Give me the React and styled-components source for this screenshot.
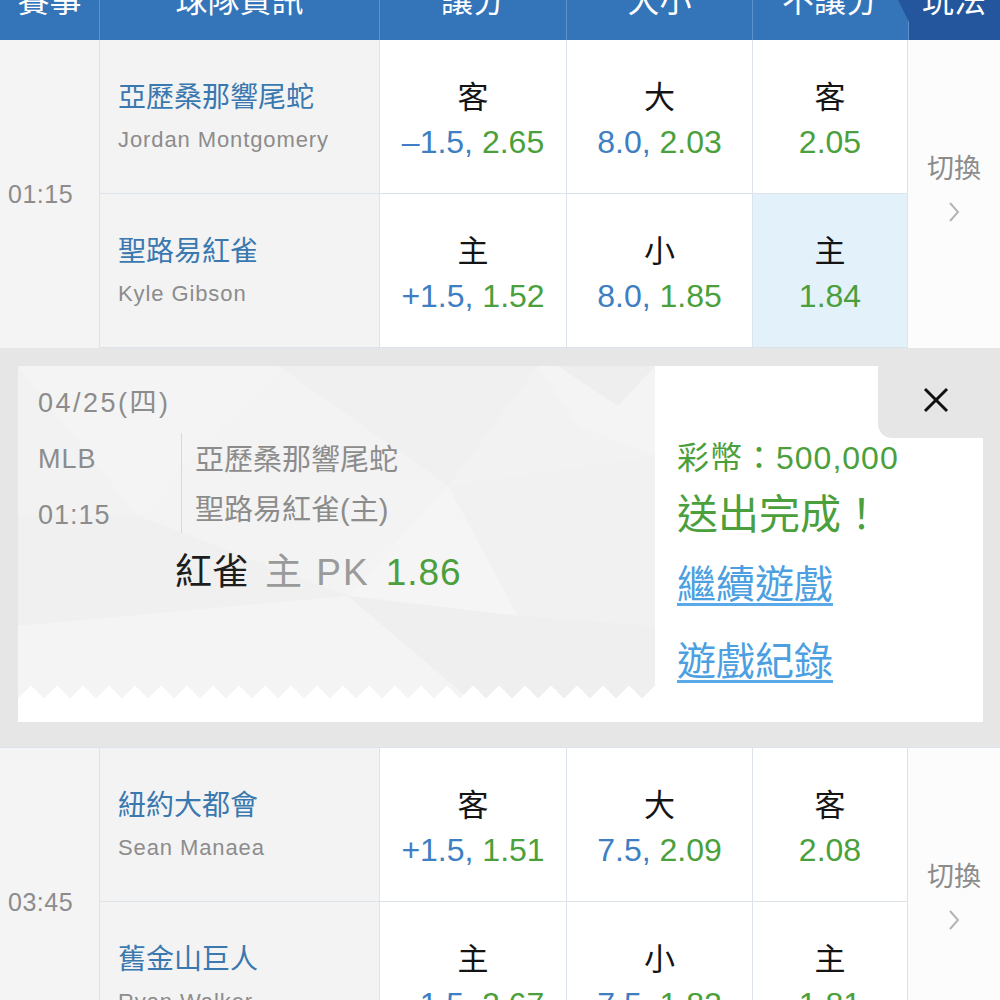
import React from 'react';
import styled, { createGlobalStyle } from 'styled-components';

const GlobalStyle = createGlobalStyle`
  * { box-sizing: border-box; }
  html, body { margin: 0; padding: 0; background: #ffffff; }
  body { font-family: "Liberation Sans", "Noto Sans CJK TC", sans-serif; overflow: hidden; }
`;

const COLS = '100px 280px 187px 186px 155px 92px';
const LINE = '#dce3ea';
const BLUE = '#3d7fc2';
const GREEN = '#4b9f3d';
const GRAY = '#8c8c8c';

const Page = styled.div`
  width: 1000px;
`;

const Header = styled.div`
  display: grid;
  grid-template-columns: ${COLS};
  height: 84px;
  margin-top: -44px;
  background: #3474b8;
`;

const HeadCell = styled.div`
  position: relative;
  display: flex;
  align-items: center;
  justify-content: center;
  color: #ffffff;
  font-size: 32px;
  border-right: 1px solid ${(p) => (p.$last ? 'transparent' : '#5e92cb')};
  background: ${(p) => (p.$dark ? '#23569c' : 'transparent')};
  border-left: ${(p) => (p.$dark ? '1px solid #5e92cb' : 'none')};
  ${(p) =>
    p.$dark &&
    `
    &::before {
      content: '';
      position: absolute;
      left: -33px;
      top: 0;
      width: 33px;
      height: 66px;
      background: #23569c;
      clip-path: polygon(0 0, 100% 0, 100% 100%);
    }
  `}
`;

const Game = styled.div`
  display: grid;
  grid-template-columns: ${COLS};
  grid-template-rows: 154px 154px;
  border-top: ${(p) => (p.$topBorder ? `1px solid ${LINE}` : 'none')};
`;

const TimeCell = styled.div`
  grid-row: span 2;
  display: flex;
  align-items: center;
  padding-left: 8px;
  background: #f4f4f4;
  border-right: 1px solid ${LINE};
  color: ${GRAY};
  font-size: 25px;
  letter-spacing: 0.5px;
`;

const TeamCell = styled.div`
  display: flex;
  flex-direction: column;
  padding: 37px 0 0 18px;
  background: #f3f3f3;
  border-right: 1px solid ${LINE};
  border-bottom: 1px solid ${LINE};
`;

const TeamName = styled.div`
  color: #3a78b0;
  font-size: 28px;
  line-height: 42px;
`;

const Pitcher = styled.div`
  color: ${GRAY};
  font-size: 22px;
  letter-spacing: 0.9px;
  line-height: 42px;
`;

const OddsCell = styled.div`
  display: flex;
  flex-direction: column;
  align-items: center;
  padding-top: 36px;
  background: ${(p) => (p.$selected ? '#e3f1fb' : '#ffffff')};
  border-right: 1px solid ${LINE};
  border-bottom: 1px solid ${LINE};
`;

const Label = styled.div`
  color: #141414;
  font-size: 31px;
  line-height: 44px;
`;

const Odds = styled.div`
  font-size: 32px;
  line-height: 44px;
  color: ${GREEN};
  white-space: nowrap;
`;

const Line = styled.span`
  color: ${BLUE};
`;

const SwitchCell = styled.div`
  grid-row: span 2;
  display: flex;
  flex-direction: column;
  align-items: center;
  justify-content: center;
  gap: 14px;
  padding-bottom: 18px;
  background: #fcfcfc;
  color: ${GRAY};
  font-size: 27px;
`;

const Overlay = styled.div`
  background: #e6e6e6;
  padding: 18px 17px 25px 18px;
`;

const Card = styled.div`
  display: flex;
  height: 356px;
`;

const Ticket = styled.div`
  position: relative;
  width: 637px;
  display: flex;
  flex-direction: column;
  background: #ffffff;
`;

const TicketFace = styled.div`
  position: relative;
  height: 332px;
  background: #f2f2f2;
  overflow: hidden;
  padding: 17px 0 0 20px;
`;

const Facets = styled.svg`
  position: absolute;
  inset: 0;
  z-index: 0;
`;

const Zigzag = styled.div`
  position: absolute;
  left: 0;
  right: 0;
  bottom: 0;
  height: 13px;
  background: conic-gradient(from 135deg at 50% 0, #ffffff 90deg, transparent 0) repeat-x left bottom / 26px 13px;
  z-index: 1;
`;

const FaceContent = styled.div`
  position: relative;
  z-index: 2;
`;

const DateLine = styled.div`
  color: ${GRAY};
  font-size: 27px;
  letter-spacing: 2.5px;
  line-height: 40px;
`;

const InfoRow = styled.div`
  display: flex;
  margin-top: 10px;
`;

const MetaCol = styled.div`
  width: 143px;
  color: ${GRAY};
  font-size: 27px;
  letter-spacing: 1px;
  line-height: 56px;
  margin-top: -2px;
`;

const MatchCol = styled.div`
  border-left: 1.5px solid #d8d8d8;
  padding: 2px 0 0 13px;
  color: ${GRAY};
  font-size: 29px;
  line-height: 50px;
  height: 100px;
`;

const BetLine = styled.div`
  margin: 5px 0 0 137px;
  font-size: 37px;
  line-height: 50px;
  display: flex;
  gap: 16px;
`;

const BetPart = styled.span`
  color: ${(p) => p.$color};
  letter-spacing: ${(p) => p.$spacing || 0}px;
`;

const ResultPanel = styled.div`
  flex: 1;
  display: flex;
  flex-direction: column;
  background: #ffffff;
`;

const TopBar = styled.div`
  display: flex;
  justify-content: flex-end;
`;

const CloseTab = styled.div`
  width: 105px;
  height: 72px;
  background: #e6e6e6;
  border-bottom-left-radius: 14px;
  display: flex;
  align-items: center;
  justify-content: center;
  padding: 0 0 4px 10px;
`;

const ResultBody = styled.div`
  padding-left: 22px;
`;

const Coins = styled.div`
  color: ${GREEN};
  font-size: 32px;
  letter-spacing: 1px;
  line-height: 40px;
  white-space: nowrap;
`;

const Done = styled.div`
  color: ${GREEN};
  font-size: 41px;
  line-height: 74px;
`;

const LinkText = styled.a`
  display: block;
  width: max-content;
  color: #4c9fe0;
  font-size: 39px;
  line-height: 66px;
  text-decoration: underline;
  text-decoration-thickness: 3px;
  text-underline-offset: 5px;
  text-decoration-color: #5aa9e8;
  margin-top: ${(p) => p.$gap || 0}px;
`;

const games = [
  {
    time: '01:15',
    rows: [
      {
        team: '亞歷桑那響尾蛇',
        pitcher: 'Jordan Montgomery',
        hcp: { label: '客', line: '–1.5', odds: '2.65' },
        ou: { label: '大', line: '8.0', odds: '2.03' },
        ml: { label: '客', odds: '2.05' },
      },
      {
        team: '聖路易紅雀',
        pitcher: 'Kyle Gibson',
        hcp: { label: '主', line: '+1.5', odds: '1.52' },
        ou: { label: '小', line: '8.0', odds: '1.85' },
        ml: { label: '主', odds: '1.84', selected: true },
      },
    ],
  },
  {
    time: '03:45',
    rows: [
      {
        team: '紐約大都會',
        pitcher: 'Sean Manaea',
        hcp: { label: '客', line: '+1.5', odds: '1.51' },
        ou: { label: '大', line: '7.5', odds: '2.09' },
        ml: { label: '客', odds: '2.08' },
      },
      {
        team: '舊金山巨人',
        pitcher: 'Ryan Walker',
        hcp: { label: '主', line: '–1.5', odds: '2.67' },
        ou: { label: '小', line: '7.5', odds: '1.82' },
        ml: { label: '主', odds: '1.81' },
      },
    ],
  },
];

const Chevron = () => (
  <svg width="14" height="24" viewBox="0 0 14 24">
    <polyline points="3,3 11,12 3,21" fill="none" stroke="#b5b5b5" strokeWidth="2" />
  </svg>
);

const CloseIcon = () => (
  <svg width="28" height="28" viewBox="0 0 28 28">
    <line x1="3" y1="3" x2="25" y2="25" stroke="#111" strokeWidth="3" />
    <line x1="25" y1="3" x2="3" y2="25" stroke="#111" strokeWidth="3" />
  </svg>
);

const OddsBox = ({ data }) => (
  <OddsCell $selected={data.selected}>
    <Label>{data.label}</Label>
    <Odds>
      {data.line && <Line>{data.line}, </Line>}
      {data.odds}
    </Odds>
  </OddsCell>
);

const GameBlock = ({ game, topBorder }) => {
  const cells = [<TimeCell key="t">{game.time}</TimeCell>];
  game.rows.forEach((r, i) => {
    cells.push(
      <TeamCell key={`team${i}`}>
        <TeamName>{r.team}</TeamName>
        <Pitcher>{r.pitcher}</Pitcher>
      </TeamCell>,
      <OddsBox key={`h${i}`} data={r.hcp} />,
      <OddsBox key={`o${i}`} data={r.ou} />,
      <OddsBox key={`m${i}`} data={r.ml} />
    );
    if (i === 0) {
      cells.push(
        <SwitchCell key="sw">
          <span>切換</span>
          <Chevron />
        </SwitchCell>
      );
    }
  });
  return <Game $topBorder={topBorder}>{cells}</Game>;
};

const FacetArt = () => (
  <Facets width="637" height="332" viewBox="0 0 637 332" preserveAspectRatio="none">
    <polygon points="0,0 260,0 120,150" fill="#f4f4f4" />
    <polygon points="260,0 520,0 430,120" fill="#f0f0f0" />
    <polygon points="520,0 637,0 637,90 560,60" fill="#f4f4f4" />
    <polygon points="120,150 260,0 430,120 330,230" fill="#f3f3f3" />
    <polygon points="0,150 120,150 330,230 0,260" fill="#f0f0f0" />
    <polygon points="430,120 637,90 637,260 500,250" fill="#f1f1f1" />
    <polygon points="330,230 430,120 500,250" fill="#f5f5f5" />
    <polygon points="0,260 330,230 450,332 0,332" fill="#f4f4f4" />
    <polygon points="330,230 500,250 637,260 637,332 450,332" fill="#efefef" />
    <polygon points="540,0 637,0 600,40" fill="#eeeeee" />
  </Facets>
);

export default function App() {
  return (
    <>
      <GlobalStyle />
      <Page>
        <Header>
          <HeadCell>賽事</HeadCell>
          <HeadCell>球隊資訊</HeadCell>
          <HeadCell>讓分</HeadCell>
          <HeadCell>大小</HeadCell>
          <HeadCell $last>不讓分</HeadCell>
          <HeadCell $dark $last>玩法</HeadCell>
        </Header>
        <GameBlock game={games[0]} />
        <Overlay>
          <Card>
            <Ticket>
              <TicketFace>
                <FacetArt />
                <Zigzag />
                <FaceContent>
                  <DateLine>04/25(四)</DateLine>
                  <InfoRow>
                    <MetaCol>
                      <div>MLB</div>
                      <div>01:15</div>
                    </MetaCol>
                    <MatchCol>
                      <div>亞歷桑那響尾蛇</div>
                      <div>聖路易紅雀(主)</div>
                    </MatchCol>
                  </InfoRow>
                  <BetLine>
                    <BetPart $color="#1e1e1e">紅雀</BetPart>
                    <BetPart $color="#9a9a9a" $spacing={2}>主 PK</BetPart>
                    <BetPart $color={GREEN} $spacing={1}>1.86</BetPart>
                  </BetLine>
                </FaceContent>
              </TicketFace>
            </Ticket>
            <ResultPanel>
              <TopBar>
                <CloseTab>
                  <CloseIcon />
                </CloseTab>
              </TopBar>
              <ResultBody>
                <Coins>彩幣：500,000</Coins>
                <Done>送出完成！</Done>
                <LinkText href="#">繼續遊戲</LinkText>
                <LinkText href="#" $gap={11}>遊戲紀錄</LinkText>
              </ResultBody>
            </ResultPanel>
          </Card>
        </Overlay>
        <GameBlock game={games[1]} topBorder />
      </Page>
    </>
  );
}
